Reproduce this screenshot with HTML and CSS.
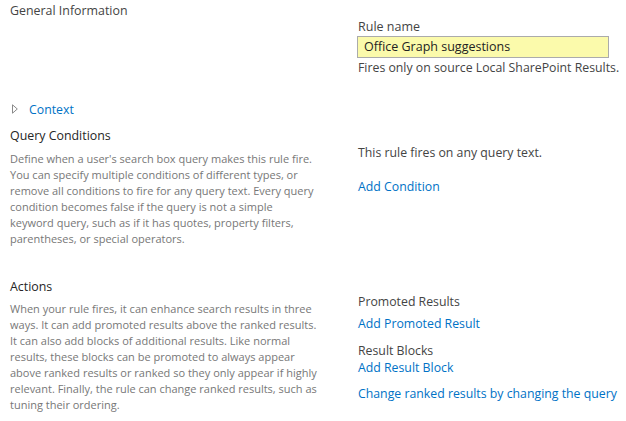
FILE: index.html
```html
<!DOCTYPE html>
<html>
<head>
<meta charset="utf-8">
<link rel="stylesheet" href="styles.css">
</head>
<body>
<div class="page">
  <section class="row general">
    <div class="left"><h2 class="heading">General Information</h2></div>
    <div class="right">
      <label class="label">Rule name</label>
      <div class="input">Office Graph suggestions</div>
      <div class="note">Fires only on source Local SharePoint Results.</div>
    </div>
  </section>

  <div class="context">
    <svg class="tri" width="6" height="10" viewBox="0 0 6 10"><path d="M0.5 0.8 L5.3 5 L0.5 9.2 Z" fill="#fff" stroke="#8a8a8a" stroke-width="1"/></svg>
    <a class="link">Context</a>
  </div>

  <section class="row query">
    <div class="left">
      <h2 class="heading dark">Query Conditions</h2>
      <p class="desc">Define when a user's search box query makes this rule fire.<br>You can specify multiple conditions of different types, or<br>remove all conditions to fire for any query text. Every query<br>condition becomes false if the query is not a simple<br>keyword query, such as if it has quotes, property filters,<br>parentheses, or special operators.</p>
    </div>
    <div class="right query-right">
      <div class="note">This rule fires on any query text.</div>
      <a class="link">Add Condition</a>
    </div>
  </section>

  <section class="row actions">
    <div class="left">
      <h2 class="heading dark">Actions</h2>
      <p class="desc">When your rule fires, it can enhance search results in three<br>ways. It can add promoted results above the ranked results.<br>It can also add blocks of additional results. Like normal<br>results, these blocks can be promoted to always appear<br>above ranked results or ranked so they only appear if highly<br>relevant. Finally, the rule can change ranked results, such as<br>tuning their ordering.</p>
    </div>
    <div class="right actions-right">
      <div class="sub">Promoted Results</div>
      <a class="link">Add Promoted Result</a>
      <div class="sub second">Result Blocks</div>
      <a class="link">Add Result Block</a>
      <a class="link last">Change ranked results by changing the query</a>
    </div>
  </section>
</div>
</body>
</html>
```

FILE: styles.css
```css
* { box-sizing: border-box; }
html, body { margin: 0; padding: 0; background: #fff; }
body {
  font-family: "Open Sans", "Noto Sans", sans-serif;
  font-size: 12.3px;
  color: #444;
}
.page { padding: 0 0 0 10px; width: 626px; }
.row {
  display: grid;
  grid-template-columns: 348px 1fr;
}
.heading {
  margin: 0;
  font-weight: normal;
  font-size: 12.4px;
  line-height: 16px;
  color: #444;
}
.heading.dark { color: #262626; }
.general { padding-top: 3px; height: 96px; }
.general .right { padding-top: 16px; display: flex; flex-direction: column; align-items: flex-start; }
.label { display: block; line-height: 16px; font-size: 12.5px; color: #444; }
.input {
  margin-top: 1px;
  margin-left: -1px;
  width: 252px;
  height: 22px;
  border: 1px solid #ababab;
  background: #fbfaab;
  padding: 0 6px;
  line-height: 20px;
  font-size: 12.5px;
  color: #222;
}
.note { line-height: 16px; margin-top: 2px; color: #444; }
.context { display: flex; align-items: center; height: 24px; gap: 11px; padding-left: 2px; margin-top: 2px; margin-bottom: 5px; }
.tri { display: block; margin-top: -3px; }
.link { color: #0072c6; text-decoration: none; line-height: 16px; display: block; }
.context .link { display: inline; }
.query { height: 152px; padding-top: 1px; }
.desc {
  margin: 8px 0 0;
  font-size: 11px;
  line-height: 16px;
  color: #777;
  width: 330px;
  white-space: nowrap;
}
.query .desc { margin-top: 7px; }
.actions .desc { margin-top: 6px; }
.query-right { padding-top: 17px; }
.query-right .note { margin-top: 0; }
.query-right .link { margin-top: 18px; }
.actions-right { padding-top: 15px; }
.actions-right .sub { line-height: 16px; color: #444; }
.actions-right .link { margin-top: 6px; }
.actions-right .sub.second { margin-top: 11px; }
.actions-right .sub.second + .link { margin-top: 1px; }
.actions-right .link.last { margin-top: 10px; }
```
